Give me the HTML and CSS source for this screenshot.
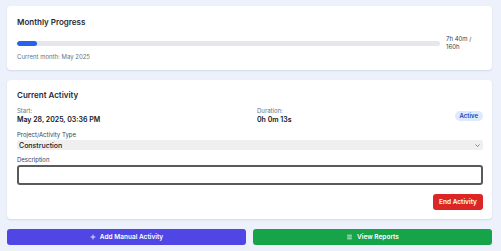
FILE: index.html
```html
<!DOCTYPE html>
<html>
<head>
<meta charset="utf-8">
<link rel="stylesheet" href="styles.css">
</head>
<body>
<div class="page">
  <section class="card progress-card">
    <h2 class="card-title">Monthly Progress</h2>
    <div class="progress-row">
      <div class="bar"><div class="bar-fill" style="width:4.8%"></div></div>
      <div class="bar-label">7h 40m / 160h</div>
    </div>
    <div class="muted">Current month: May 2025</div>
  </section>

  <section class="card activity-card">
    <h2 class="card-title">Current Activity</h2>
    <div class="info-row">
      <div class="info">
        <div class="label">Start:</div>
        <div class="value">May 28, 2025, 03:36 PM</div>
      </div>
      <div class="info">
        <div class="label">Duration:</div>
        <div class="value">0h 0m 13s</div>
      </div>
      <span class="badge">Active</span>
    </div>
    <div class="field">
      <div class="field-label">Project/Activity Type</div>
      <div class="select">
        <span>Construction</span>
        <svg class="chev" viewBox="0 0 10 6" width="5" height="3"><path d="M1 1l4 4 4-4" fill="none" stroke="#555" stroke-width="1.4"/></svg>
      </div>
    </div>
    <div class="field">
      <div class="field-label">Description</div>
      <div class="textarea"></div>
    </div>
    <div class="actions">
      <button class="btn btn-red">End Activity</button>
    </div>
  </section>

  <div class="bottom-row">
    <button class="btn btn-indigo wide">
      <svg viewBox="0 0 10 10" width="6" height="6"><path d="M5 1v8M1 5h8" stroke="#fff" stroke-width="1.4" fill="none"/></svg>
      Add Manual Activity
    </button>
    <button class="btn btn-green wide">
      <svg viewBox="0 0 10 10" width="7" height="6"><path d="M1 2h8M1 5h8M1 8h8" stroke="#fff" stroke-width="1.2" fill="none"/></svg>
      View Reports
    </button>
  </div>
</div>
</body>
</html>
```
FILE: styles.css
```css
* { box-sizing: border-box; }
html, body { margin: 0; padding: 0; }
body {
  background: #edf1fb;
  font-family: Inter, "Noto Sans", sans-serif;
  color: #1f2937;
  width: 501px;
  height: 251px;
  overflow: hidden;
}
.page {
  padding: 6px 9px 6px 7px;
  display: flex;
  flex-direction: column;
  gap: 10px;
}
.card {
  background: #fff;
  border-radius: 4px;
  box-shadow: 0 1px 2px rgba(30, 41, 80, 0.12);
  padding: 11px 9px 10px 10px;
}
.card-title {
  margin: 0;
  font-size: 8px;
  font-weight: 600;
  line-height: 10px;
  color: #1f2937;
}
.progress-card { height: 64px; }
.progress-row {
  display: flex;
  align-items: center;
  gap: 6px;
  margin-top: 8px;
}
.bar {
  flex: 1;
  height: 5px;
  background: #e5e7eb;
  border-radius: 3px;
  overflow: hidden;
}
.bar-fill {
  height: 100%;
  background: #2563eb;
  border-radius: 3px;
}
.bar-label {
  width: 37px;
  font-size: 6px;
  line-height: 8px;
  color: #374151;
}
.muted {
  margin-top: 2px;
  font-size: 6px;
  line-height: 8px;
  color: #6b7280;
}
.activity-card { height: 139px; padding-top: 10px; }
.info-row {
  display: grid;
  grid-template-columns: 240px 1fr auto;
  align-items: center;
  margin-top: 7px;
}
.label {
  font-size: 6px;
  line-height: 8px;
  color: #6b7280;
}
.value {
  font-size: 7px;
  line-height: 10px;
  font-weight: 600;
  color: #111827;
}
.badge {
  background: #dbeafe;
  color: #1e40af;
  font-size: 6px;
  font-weight: 600;
  line-height: 10px;
  padding: 0 5px;
  border-radius: 6px;
}
.field { margin-top: 6px; }
.field-label {
  font-size: 6px;
  line-height: 8px;
  color: #374151;
  margin-bottom: 1px;
}
.select {
  height: 10px;
  background: #efefef;
  border-radius: 2px;
  display: flex;
  align-items: center;
  justify-content: space-between;
  padding: 0 3px 0 2px;
  font-size: 7px;
  font-weight: 500;
  color: #111827;
}
.textarea {
  height: 20px;
  border: 2px solid #5a5a5a;
  border-radius: 3px;
}
.actions {
  display: flex;
  justify-content: flex-end;
  margin-top: 9px;
}
.btn {
  border: none;
  color: #fff;
  font-family: inherit;
  font-size: 6.5px;
  font-weight: 600;
  white-space: nowrap;
  border-radius: 3px;
  height: 16px;
  display: inline-flex;
  align-items: center;
  justify-content: center;
  gap: 4px;
  padding: 0 7px;
}
.btn-red { background: #dc2626; width: 50px; padding: 0; }
.btn-indigo { background: #4f46e5; }
.btn-green { background: #16a34a; }
.bottom-row {
  display: flex;
  gap: 7px;
}
.wide { flex: 1; }
```
